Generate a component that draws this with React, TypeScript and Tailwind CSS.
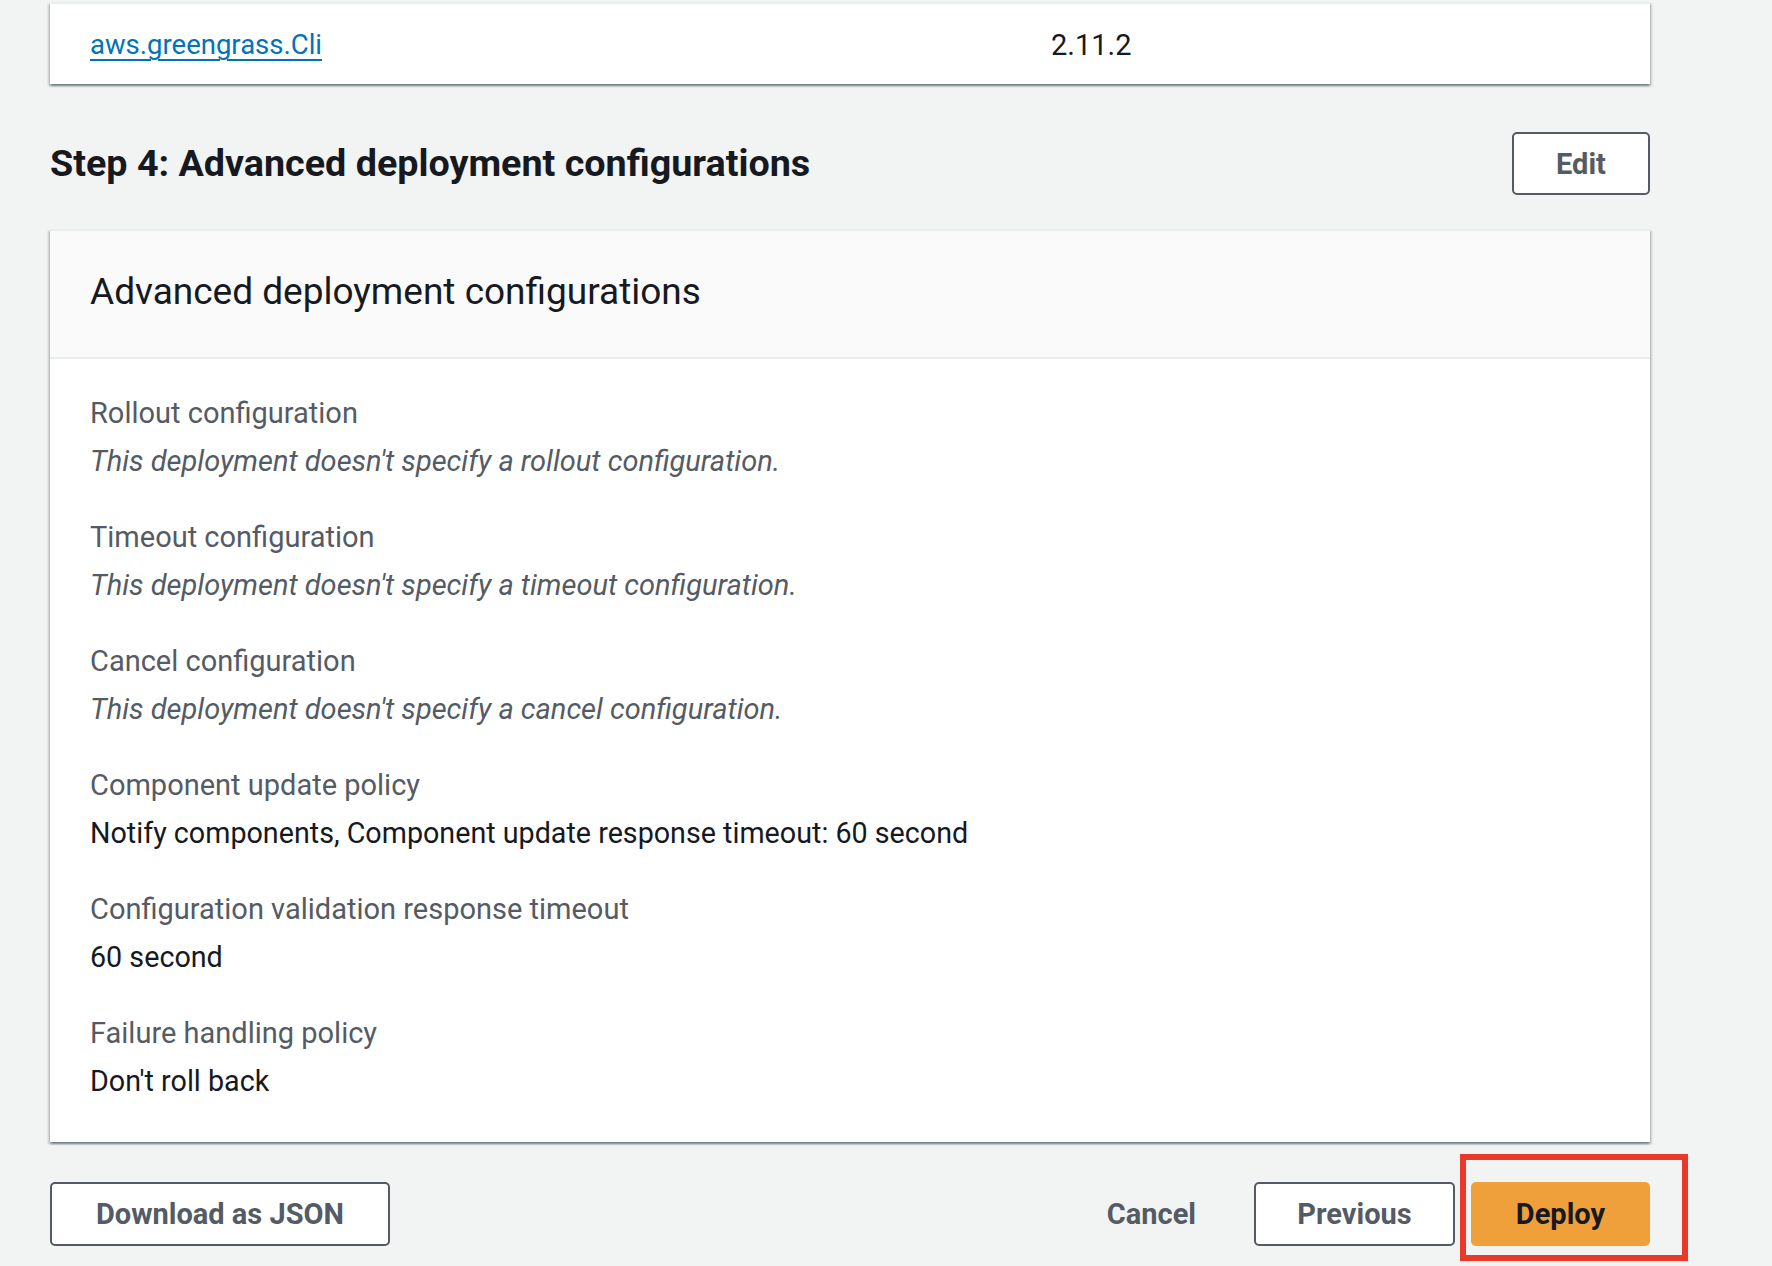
import React from "react";

const font = { fontFamily: "Roboto, 'Open Sans', sans-serif" };

function Field({ label, value, italic }: { label: string; value: string; italic?: boolean }) {
  return (
    <div className="flex flex-col gap-[4px]">
      <div className="text-[29px] leading-[44px] text-[#545b64]">{label}</div>
      <div className={italic ? "text-[29px] leading-[44px] italic text-[#545b64]" : "text-[28.7px] leading-[44px] text-[#16191f]"}>
        {value}
      </div>
    </div>
  );
}

export default function App() {
  return (
    <div className="relative w-[1772px] h-[1266px] overflow-hidden bg-[#f2f3f3]" style={font}>
      <div className="w-[1600px] ml-[50px] pt-[2px]">
        {/* Top card (cut off) */}
        <div className="bg-white border-t-2 border-[#eaeded] shadow-[0_2px_2px_0_rgba(0,28,36,0.35),2px_2px_2px_0_rgba(0,28,36,0.15),-2px_2px_2px_0_rgba(0,28,36,0.15)] h-[82px] flex items-center pt-[2px]">
          <div className="w-[961px] pl-[40px]">
            <a className="text-[27.5px] leading-[44px] text-[#0073bb] underline underline-offset-[5px] decoration-[2px]">aws.greengrass.Cli</a>
          </div>
          <div className="pl-[40px] text-[29px] leading-[44px] text-[#16191f]">2.11.2</div>
        </div>

        {/* Step heading */}
        <div className="flex items-center justify-between mt-[48px] h-[63px]">
          <h2 className="text-[37.7px] font-bold text-[#16191f] leading-[44px] pb-[2px]">Step 4: Advanced deployment configurations</h2>
          <button className="w-[138px] h-[63px] border-2 border-[#545b64] rounded-[5px] bg-white text-[29px] font-bold text-[#545b64] pt-[3px]">
            Edit
          </button>
        </div>

        {/* Main card */}
        <div className="mt-[34px] bg-white border-t-2 border-[#eaeded] shadow-[0_2px_2px_0_rgba(0,28,36,0.35),2px_2px_2px_0_rgba(0,28,36,0.15),-2px_2px_2px_0_rgba(0,28,36,0.15)]">
          <div className="bg-[#fafafa] h-[128px] flex items-center px-[40px] border-b-2 border-[#eaeded] pb-[4px]">
            <h2 className="text-[37px] leading-[44px] text-[#16191f]">Advanced deployment configurations</h2>
          </div>
          <div className="px-[40px] pt-[32px] pb-[39px] flex flex-col gap-[32px]">
            <Field label="Rollout configuration" value="This deployment doesn't specify a rollout configuration." italic />
            <Field label="Timeout configuration" value="This deployment doesn't specify a timeout configuration." italic />
            <Field label="Cancel configuration" value="This deployment doesn't specify a cancel configuration." italic />
            <Field label="Component update policy" value="Notify components, Component update response timeout: 60 second" />
            <Field label="Configuration validation response timeout" value="60 second" />
            <Field label="Failure handling policy" value="Don't roll back" />
          </div>
        </div>

        {/* Action buttons */}
        <div className="mt-[40px] flex items-center">
          <button className="w-[340px] h-[64px] border-2 border-[#545b64] rounded-[5px] bg-white text-[29px] font-bold text-[#545b64] pt-[2px]">
            Download as JSON
          </button>
          <div className="flex-1" />
          <button className="h-[64px] px-[14px] text-[29px] font-bold text-[#545b64] mr-[44px] pt-[2px]">Cancel</button>
          <button className="w-[201px] h-[64px] border-2 border-[#545b64] rounded-[5px] bg-white text-[29px] font-bold text-[#545b64] pt-[2px]">
            Previous
          </button>
          <div className="relative ml-[16px]">
            <button className="w-[179px] h-[64px] rounded-[5px] bg-[#f0a03a] text-[29px] font-bold text-[#16191f] pt-[2px]">
              Deploy
            </button>
            <div className="absolute left-[-11px] top-[-28px] w-[228px] h-[107px] border-[6px] border-[#e8392b]" />
          </div>
        </div>
      </div>
    </div>
  );
}
